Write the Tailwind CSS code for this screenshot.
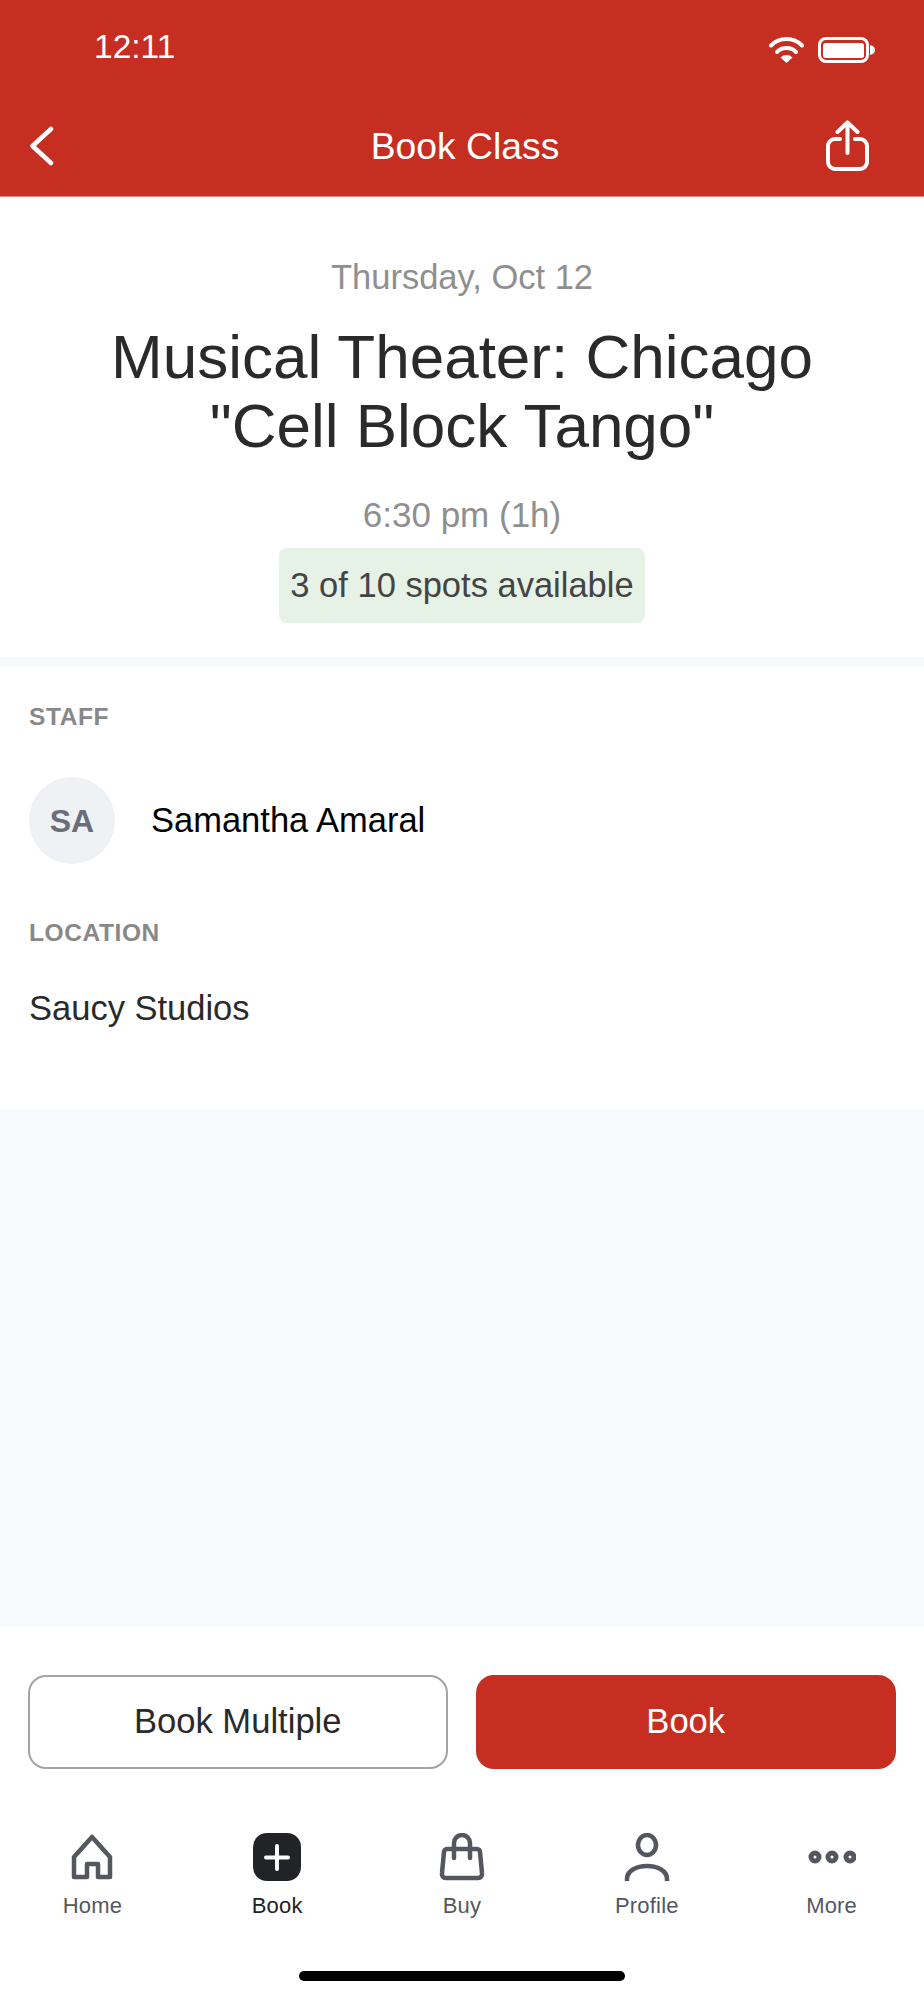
<!DOCTYPE html>
<html lang="en">
<head>
  <meta charset="UTF-8">
  <meta name="viewport" content="width=device-width, initial-scale=1.0">
  <title>Book Class</title>
  <script src="https://cdn.jsdelivr.net/npm/@tailwindcss/browser@4"></script>
</head>
<body class="bg-white font-['Liberation_Sans',sans-serif]">
  <div class="w-[924px] h-[2000px] flex flex-col overflow-hidden">

    <!-- header -->
    <header class="h-[197px] shrink-0 bg-[#c62e22] border-b border-[#e08a84] text-white">
      <div class="h-[96px] flex items-start justify-between pl-[94px] pr-[49px]">
        <span class="mt-[27px] text-[33.5px] leading-[40px]">12:11</span>
        <div class="mt-[37px] flex items-center gap-[14px]">
          <svg width="35" height="26" viewBox="0 0 35 26" fill="none" stroke="white" stroke-width="4" stroke-linecap="round">
            <path d="M2 8.5A22 22 0 0 1 33 8.5"/>
            <path d="M8 15A13.5 13.5 0 0 1 27 15"/>
            <path d="M17.5 26L11.5 20.5A8.5 8.5 0 0 1 23.5 20.5Z" fill="white" stroke="none"/>
          </svg>
          <svg width="57" height="26" viewBox="0 0 57 26" fill="none">
            <rect x="1.5" y="1.5" width="48" height="23" rx="6.5" stroke="white" stroke-width="3"/>
            <rect x="5" y="6" width="41" height="15" rx="2.5" fill="white"/>
            <path d="M52 8C55 8.5 57 10.5 57 13C57 15.5 55 17.500 52 18Z" fill="white"/>
          </svg>
        </div>
      </div>
      <div class="h-[100px] grid grid-cols-[1fr_auto_1fr] items-center pl-[29px] pr-[23px]">
        <svg width="25" height="40" viewBox="0 0 25 40" fill="none" stroke="white" stroke-width="4.500" stroke-linecap="round" stroke-linejoin="round">
          <path d="M22 3L3.500 20L22 37"/>
        </svg>
        <h1 class="text-[37.3px] leading-[44px]">Book Class</h1>
        <svg class="justify-self-end mr-[32px] -mt-[2px]" width="43" height="51" viewBox="0 0 43 51" fill="none" stroke="white" stroke-width="4" stroke-linecap="round" stroke-linejoin="round">
          <path d="M14 19H9a7 7 0 0 0-7 7V42a7 7 0 0 0 7 7H34a7 7 0 0 0 7-7V26a7 7 0 0 0-7-7H29"/>
          <path d="M21.500 33V2.500"/>
          <path d="M11.500 12L21.500 2.500L31.500 12"/>
        </svg>
      </div>
    </header>

    <!-- class summary -->
    <section class="h-[460px] shrink-0 pt-[60px] flex flex-col items-center text-center">
      <p class="text-[34.5px] leading-[40px] text-[#8f8f8f]">Thursday, Oct 12</p>
      <h2 class="mt-[25px] text-[62px] leading-[69px] text-[#2a2a2a]">Musical Theater: Chicago<br>"Cell Block Tango"</h2>
      <p class="mt-[35px] text-[35px] leading-[40px] text-[#8f8f8f]">6:30 pm (1h)</p>
      <span class="mt-[13px] h-[75px] w-[366px] justify-center flex items-center rounded-lg bg-[#e5f2e5] text-[34.5px] text-[#444444]">3 of 10 spots available</span>
    </section>

    <div class="h-[9px] shrink-0 bg-[#f8f9fb]"></div>

    <!-- staff and location -->
    <section class="h-[443px] shrink-0 px-[29px] pt-[37px]">
      <h3 class="text-[24.5px] leading-[28px] font-bold tracking-[0.6px] text-[#888888]">STAFF</h3>
      <div class="mt-[46px] flex items-center gap-[36px]">
        <div class="w-[86px] h-[87px] rounded-full bg-[#f0f1f4] flex items-center justify-center text-[32px] font-bold text-[#6b6d7b]">SA</div>
        <span class="text-[34.5px] text-black">Samantha Amaral</span>
      </div>
      <h3 class="mt-[55px] text-[24.5px] leading-[28px] font-bold tracking-[0.6px] text-[#888888]">LOCATION</h3>
      <p class="mt-[41px] text-[34.5px] leading-[40px] text-[#2a2a2a]">Saucy Studios</p>
    </section>

    <div class="flex-1 bg-[#f8f9fb]"></div>

    <!-- footer -->
    <footer class="h-[373px] shrink-0 pt-[48px] bg-white">
      <div class="flex gap-[28px] px-[28px]">
        <button class="w-[420px] h-[94px] rounded-[18px] border-2 border-[#a3a3a3] text-[34.6px] text-[#2a2a2a]">Book Multiple</button>
        <button class="w-[421px] h-[94px] rounded-[18px] bg-[#c62e22] text-[34.6px] text-white">Book</button>
      </div>

      <nav class="mt-[64px] grid grid-cols-5 text-[22px] leading-[28px] tracking-[0.2px] text-[#55575f]">
        <a class="flex flex-col items-center gap-[11px]">
          <svg width="48" height="48" viewBox="0 0 48 48" fill="none" stroke="#55575f" stroke-width="4.500" stroke-linejoin="round">
            <path d="M24 4L42 24V44H30V31H19V44H6V24Z"/>
          </svg>
          Home
        </a>
        <a class="flex flex-col items-center gap-[11px] text-[#222327]">
          <svg width="48" height="48" viewBox="0 0 48 48" fill="none">
            <rect width="48" height="48" rx="14" fill="#222327"/>
            <path d="M24 13V36M13 24.500H35" stroke="white" stroke-width="4" stroke-linecap="round"/>
          </svg>
          Book
        </a>
        <a class="flex flex-col items-center gap-[11px]">
          <svg width="48" height="48" viewBox="0 0 48 48" fill="none" stroke="#55575f" stroke-width="4.500" stroke-linecap="round" stroke-linejoin="round">
            <path d="M9 16H39a3 3 0 0 1 3 3L44 40a4 4 0 0 1-4 5H8a4 4 0 0 1-4-5L6 19a3 3 0 0 1 3-3Z"/>
            <path d="M16 25V10a8 8 0 0 1 16 0V25"/>
          </svg>
          Buy
        </a>
        <a class="flex flex-col items-center gap-[11px]">
          <svg width="48" height="48" viewBox="0 0 48 48" fill="none" stroke="#55575f" stroke-width="4.500">
            <ellipse cx="24" cy="12" rx="9" ry="10"/>
            <path d="M4 48V46C4 38 13 33 24 33C35 33 44 38 44 46V48"/>
          </svg>
          Profile
        </a>
        <a class="flex flex-col items-center gap-[11px]">
          <svg width="48" height="48" viewBox="0 0 48 48" fill="none" stroke="#55575f" stroke-width="5">
            <circle cx="7" cy="24" r="4"/>
            <circle cx="24" cy="24" r="4"/>
            <circle cx="42" cy="24" r="4"/>
          </svg>
          More
        </a>
      </nav>

      <div class="mt-[51px] mx-auto w-[326px] h-[10px] rounded-full bg-black"></div>
    </footer>
  </div>
</body>
</html>
